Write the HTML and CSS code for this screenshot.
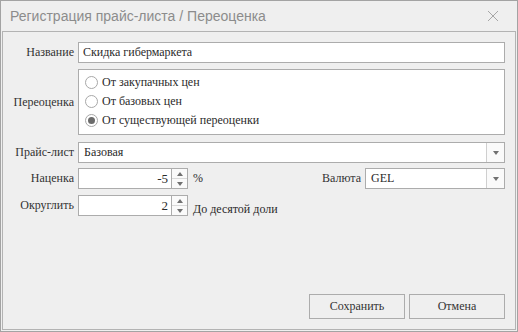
FILE: index.html
```html
<!DOCTYPE html>
<html lang="ru">
<head>
    <meta charset="UTF-8">
    <title>Регистрация прайс-листа / Переоценка</title>
    <link rel="stylesheet" href="styles.css">
</head>
<body>
    <div class="window">
        <div class="titlebar">
            <span class="title">Регистрация прайс-листа / Переоценка</span>
            <svg class="close" width="12" height="12" viewBox="0 0 12 12">
                <path d="M1 1 L11 11 M11 1 L1 11" stroke="#a6a6a6" stroke-width="1" fill="none"/>
            </svg>
        </div>

        <div class="panel">
            <div class="row row-name">
                <div class="label">Название</div>
                <div class="field grow">Скидка гибермаркета</div>
            </div>

            <div class="row row-group">
                <div class="label">Переоценка</div>
                <div class="group grow">
                    <div class="radio-line"><span class="radio"></span>От закупачных цен</div>
                    <div class="radio-line"><span class="radio"></span>От базовых цен</div>
                    <div class="radio-line"><span class="radio checked"></span>От существующей переоценки</div>
                </div>
            </div>

            <div class="row row-price">
                <div class="label">Прайс-лист</div>
                <div class="combo grow">
                    <div class="combo-text">Базовая</div>
                    <div class="combo-btn"><span class="tri-down"></span></div>
                </div>
            </div>

            <div class="row row-markup">
                <div class="label">Наценка</div>
                <div class="spin">
                    <div class="spin-text">-5</div>
                    <div class="spin-btns">
                        <div class="spin-btn"><span class="tri-up"></span></div>
                        <div class="spin-btn"><span class="tri-down"></span></div>
                    </div>
                </div>
                <div class="after">%</div>
                <div class="label label-currency">Валюта</div>
                <div class="combo currency">
                    <div class="combo-text">GEL</div>
                    <div class="combo-btn"><span class="tri-down"></span></div>
                </div>
            </div>

            <div class="row row-round">
                <div class="label">Округлить</div>
                <div class="spin">
                    <div class="spin-text">2</div>
                    <div class="spin-btns">
                        <div class="spin-btn"><span class="tri-up"></span></div>
                        <div class="spin-btn"><span class="tri-down"></span></div>
                    </div>
                </div>
                <div class="after after-low">До десятой доли</div>
            </div>

            <div class="buttons">
                <div class="button">Сохранить</div>
                <div class="button">Отмена</div>
            </div>
        </div>
    </div>
</body>
</html>
```

FILE: styles.css
```css
body {
    margin: 0;
    background-color: #efefef;
    font-family: "Liberation Serif", "Times New Roman", serif;
    font-size: 12px;
    color: #2b2b2b;
}

.window {
    width: 518px;
    height: 332px;
    box-sizing: border-box;
    border: 1px solid #a3a3a3;
    background-color: #efefef;
    display: flex;
    flex-direction: column;
}

.titlebar {
    height: 30px;
    flex-shrink: 0;
    display: flex;
    align-items: center;
    justify-content: space-between;
    padding: 0 18px 0 9px;
}

.title {
    font-family: "Liberation Sans", sans-serif;
    font-size: 14px;
    color: #8c8c8c;
}

.close {
    display: block;
}

.panel {
    flex: 1;
    margin: 0 1px 1px 1px;
    border: 1px solid #b3b3b3;
    padding: 10px 10px 10px 0;
    display: flex;
    flex-direction: column;
}

.row {
    display: flex;
    align-items: center;
}

.row-group {
    margin-top: 6px;
}

.row-price {
    margin-top: 7px;
}

.row-markup,
.row-round {
    margin-top: 5px;
}

.label {
    width: 71px;
    flex-shrink: 0;
    text-align: right;
    margin-right: 4px;
    color: #333;
}

.grow {
    flex: 1;
}

.field {
    height: 21px;
    box-sizing: border-box;
    border: 1px solid #acacac;
    background: #fff;
    padding: 0 4px;
    line-height: 19px;
}

.group {
    height: 66px;
    box-sizing: border-box;
    border: 1px solid #acacac;
    background: #fff;
    padding: 3px 0 0 6px;
}

.radio-line {
    display: flex;
    align-items: center;
    height: 19px;
}

.radio {
    width: 11px;
    height: 11px;
    border: 1px solid #a8a8a8;
    border-radius: 50%;
    background: #fff;
    margin-right: 4px;
    position: relative;
}

.radio.checked::after {
    content: "";
    position: absolute;
    left: 2px;
    top: 2px;
    width: 7px;
    height: 7px;
    border-radius: 50%;
    background: #6b6b6b;
}

.combo {
    height: 21px;
    box-sizing: border-box;
    border: 1px solid #acacac;
    background: #fff;
    display: flex;
}

.combo-text {
    flex: 1;
    padding: 0 5px;
    line-height: 19px;
}

.combo-btn {
    width: 17px;
    border-left: 1px solid #cfcfcf;
    background: #fafafa;
    display: flex;
    align-items: center;
    justify-content: center;
}

.tri-down,
.tri-up {
    width: 0;
    height: 0;
    border-left: 3.5px solid transparent;
    border-right: 3.5px solid transparent;
}

.tri-down {
    border-top: 4px solid #707070;
}

.tri-up {
    border-bottom: 4px solid #707070;
}

.spin {
    width: 110px;
    height: 21px;
    display: flex;
}

.spin-text {
    flex: 1;
    box-sizing: border-box;
    border: 1px solid #acacac;
    background: #fff;
    text-align: right;
    padding: 0 3px;
    line-height: 19px;
    font-size: 13px;
}

.spin-btns {
    width: 16px;
    display: flex;
    flex-direction: column;
    box-sizing: border-box;
    border: 1px solid #acacac;
    border-left: none;
}

.spin-btn {
    flex: 1;
    display: flex;
    align-items: center;
    justify-content: center;
    background: #fafafa;
}

.spin-btn + .spin-btn {
    border-top: 1px solid #d9d9d9;
}

.after {
    margin-left: 5px;
}

.after-low {
    margin-top: 8px;
}

.label-currency {
    margin-left: auto;
    width: auto;
}

.currency {
    width: 140px;
}

.buttons {
    margin-top: auto;
    display: flex;
    justify-content: flex-end;
    gap: 4px;
}

.button {
    width: 96px;
    height: 25px;
    box-sizing: border-box;
    border: 1px solid #acacac;
    background: #efefef;
    text-align: center;
    line-height: 23px;
    color: #333;
}
```
